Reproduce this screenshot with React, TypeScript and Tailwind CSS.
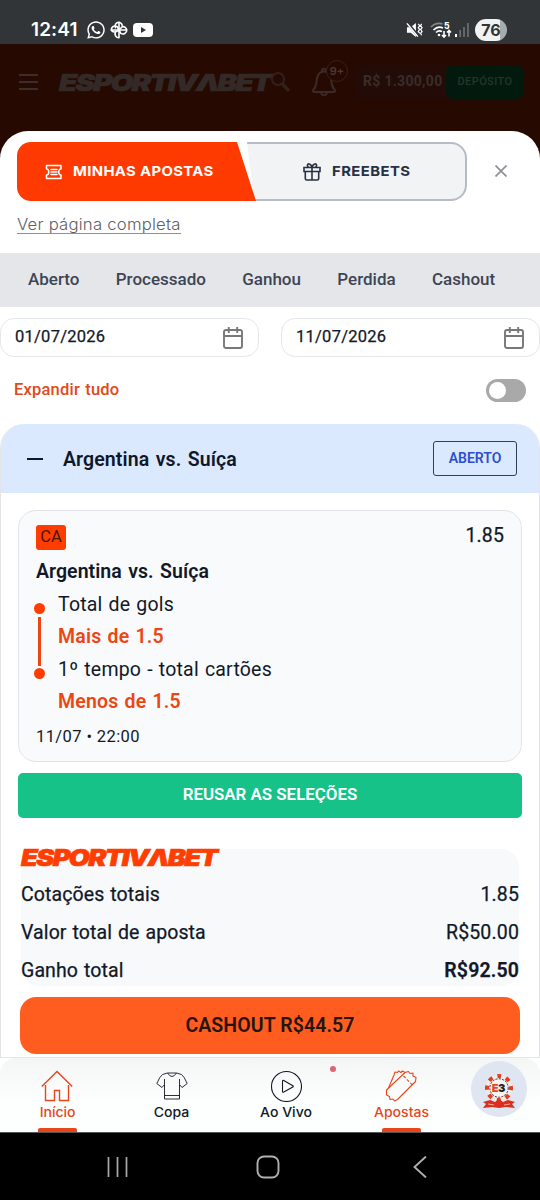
import type { ReactNode } from "react";
import clsx from "clsx";
import { FaWhatsapp } from "react-icons/fa";

const filters = ["Aberto", "Processado", "Ganhou", "Perdida", "Cashout"];

const Logo = ({ className }: { className?: string }) => (
  <svg viewBox="0 0 198 18" preserveAspectRatio="none" className={clsx("overflow-visible", className)} fill="currentColor">
    <text
      x="0"
      y="17"
      textLength="194.500"
      lengthAdjust="spacingAndGlyphs"
      letterSpacing="-1.3"
      fontFamily="Inter, sans-serif"
      fontSize="22.4"
      fontWeight="900"
      fontStyle="italic"
      stroke="currentColor"
      strokeWidth="0.7"
    >
      ESPORTIVΛBET
    </text>
  </svg>
);

const StatusBar = () => (
  <div className="h-11 bg-[#313537] flex justify-between items-start pt-[18px] pl-[31px] pr-[33px] text-white">
    <div className="flex items-center h-6">
      <span className="font-[Inter] font-semibold text-[19px] leading-6 w-[55px] tracking-[0.1px]">12:41</span>
      <FaWhatsapp className="w-[20px] h-[20px]" />
      <svg viewBox="0 0 18 18" className="w-[18px] h-[18px] ml-1" fill="none" stroke="white" strokeWidth="1.6" strokeLinejoin="round">
        <path d="M9 9V1.200a3.900 3.900 0 0 0-3.300 6" />
        <path d="M9 1.200a3.900 3.900 0 0 1 3.200 4.500L9 9" />
        <path d="M9 9h7.800a3.900 3.900 0 0 1-6 3.300L9 9M16.800 9a3.900 3.900 0 0 0-4.600-3.300" />
        <path d="M9 9v7.800a3.900 3.900 0 0 1-3.300-6L9 9" />
        <path d="M9 9H1.200a3.900 3.900 0 0 1 6-3.300L9 9M1.200 9a3.900 3.900 0 0 0 4.500 1.800" />
      </svg>
      <svg viewBox="0 0 20 14" className="w-[20px] h-[14px] ml-[5px]">
        <rect width="20" height="14" rx="4" fill="white" />
        <path d="M8 4v6l5-3z" fill="#313537" />
      </svg>
    </div>
    <div className="flex items-center h-6">
      <svg viewBox="0 0 18 18" className="w-[17px] h-[18px] mr-[7px]" fill="white">
        <path d="M1 6h4L10.500 1.500v15L5 12H1z" />
        <path d="M2 2l11.500 14" stroke="#313537" strokeWidth="3" />
        <path d="M1 2l11.500 14" stroke="white" strokeWidth="1.6" />
        <path d="M13 2.500l1.500 2-1.500 2 1.500 2-1.500 2 1.500 2M16.500 2.500l-1 2 1.500 2-1.500 2 1.500 2-1.500 2 1 2" fill="none" stroke="white" strokeWidth="1.300" />
      </svg>
      <svg viewBox="0 0 22 18" className="w-[22px] h-[18px] mr-[3px]" fill="none" stroke="white" strokeWidth="1.7">
        <path d="M1 6C4 3 8 1.800 12.500 2.800" stroke="#85888a" />
        <path d="M3.500 9c3-3 6.500-3.300 9.500-2M6 11.500c2-2 4-2 6-1" />
        <circle cx="9" cy="14" r="1.3" fill="white" stroke="none" />
        <path d="M14 10v6m-2-2 2 2 2-2M19 15.500v-6m-2 2 2-2 2 2" strokeWidth="1.6" />
        <text x="14" y="8" fill="white" stroke="none" fontFamily="Inter, sans-serif" fontSize="8.500" fontWeight="800">5</text>
      </svg>
      <svg viewBox="0 0 14 16" className="w-[14px] h-[16px] mr-[6px]">
        <path d="M1 12v3" stroke="white" strokeWidth="2" />
        <path d="M5.200 8v7M9 5v10M13 1v14" stroke="#6c7072" strokeWidth="1.700" />
      </svg>
      <div className="w-8 h-[22px] rounded-full text-[#313537] text-center font-[Inter] font-bold text-[16px] leading-[22px] bg-[linear-gradient(90deg,#f1f2f2_77%,#a8abac_77%)]">
        76
      </div>
    </div>
  </div>
);

const Header = () => (
  <header className="h-[119px] bg-[#260900] flex items-start pt-[20px] pl-[19px] pr-[16px] font-[Roboto]">
    <svg viewBox="0 0 20 18" className="w-[20px] h-[18px] mt-[9px] mr-[20px]" stroke="#3a2d2b" strokeWidth="2">
      <path d="M0 2h19M0 9h19M0 16h19" />
    </svg>
    <Logo className="w-[215px] h-[19px] mt-[9px] text-[#332a28]" />
    <svg viewBox="0 0 20 22" className="w-[20px] h-[22px] mt-[7px] -ml-[3px]" fill="none" stroke="#33201c" strokeWidth="2">
      <circle cx="7" cy="8" r="6" />
      <path d="M11.500 13l6.500 7" strokeWidth="3.500" />
    </svg>
    <div className="relative ml-[20px] mt-[2px]">
      <svg viewBox="0 0 26 31" className="w-[26px] h-[31px]" fill="none" stroke="#3b2a27" strokeWidth="2" strokeLinejoin="round">
        <path d="M2 24.500c4-4 3-7 4-12 1-5 4-7 7-7s6 2 7 7c1 5 0 8 4 12q0 1.500-1.500 1.500h-19q-1.500 0-1.500-1.500zM10 27c1 3 5 3 6 0M11 5c0-3 4-3 4 0" />
      </svg>
      <span className="absolute -top-[6px] left-[15px] w-[22px] h-[22px] rounded-full border border-[#3b1e18] bg-[#260900] text-[11px] leading-[20px] text-center font-semibold text-[#4a3936] font-[Inter]">
        9+
      </span>
    </div>
    <div className="ml-auto flex h-[34px] w-[168px] bg-[#230c07] rounded-lg mt-[1px] items-center">
      <span className="w-[90px] pl-[7px] pb-[2px] whitespace-nowrap text-[14px] font-bold tracking-[0.300px] text-[#382d2b]">R$ 1.300,00</span>
      <span className="flex-1 h-[34px] rounded-lg bg-[#021a0d] text-center text-[11px] font-medium leading-[34px] tracking-[0.400px] text-[#20382a]">DEPÓSITO</span>
    </div>
  </header>
);

const Tabs = () => (
  <div className="flex items-start pl-[17px] pt-[11px] h-[71px] font-[Inter] font-bold text-[13.5px]">
    <button className="relative z-10 w-[239px] h-[59px] bg-[#ff3a00] rounded-l-[14px] text-white flex items-center pl-[28px] [clip-path:polygon(0_0,220px_0,100%_100%,0_100%)]">
      <svg viewBox="0 0 18 16" className="w-[18px] h-[16px] mr-[10px]" fill="none" stroke="currentColor" strokeWidth="1.5" strokeLinejoin="round" strokeLinecap="round">
        <path d="M1.500 1.500h14.500v3.500c-3 0-3 6 0 6v3.500H1.500V11c3 0 3-6 0-6zM6 5.500h6M6 8h6M6 10.500h6" />
      </svg>
      <span className="inline-block origin-left scale-x-[1.100] tracking-[0.320px]">MINHAS APOSTAS</span>
    </button>
    <button className="-ml-[20px] w-[231px] h-[59px] border-2 border-[#b6bcc7] bg-[#f2f3f5] rounded-r-[16px] text-[#273044] flex items-center pl-[65px] [clip-path:polygon(11px_0,100%_0,100%_100%,18px_100%)]">
      <svg viewBox="0 0 18 18" className="w-[18px] h-[18px] mr-[11px]" fill="none" stroke="currentColor" strokeWidth="1.600">
        <path d="M1 4.500h16v4H1zM2.300 8.500v7q0 1.500 1.500 1.500h10.400q1.500 0 1.500-1.500v-7M9 4.500V17M9 4.500C8 0 4 0 4.500 3L5.500 4.500M9 4.500C10 0 14 0 13.500 3L12.500 4.500" />
      </svg>
      <span className="inline-block origin-left scale-x-[1.100] tracking-[0.400px]">FREEBETS</span>
    </button>
    <button className="ml-[28px] mt-[23px]">
      <svg viewBox="0 0 12 12" className="w-[12px] h-[12px]" stroke="#8d8f94" strokeWidth="1.700">
        <path d="M.500.500l11 11M11.500.500l-11 11" />
      </svg>
    </button>
  </div>
);

const DateField = ({ value }: { value: string }) => (
  <div className="w-[259px] h-[39px] rounded-[14px] border border-[#e5e7eb] flex items-center justify-between pl-[14px] pr-[15px] text-[16.500px] text-[#111827]">
    <span className="tracking-[0.250px] pb-[1px] [-webkit-text-stroke:0.250px]">{value}</span>
    <svg viewBox="0 0 20 22" className="w-[20px] h-[22px]" fill="none" stroke="#78787a" strokeWidth="1.900">
      <rect x="1" y="3" width="18" height="18" rx="2" />
      <path d="M1 9h18M5.800 0v6M14.200 0v6" />
    </svg>
  </div>
);

const Selection = ({ market, pick }: { market: string; pick: string }) => (
  <div className="h-[65px] pt-[1px] pl-[22px] text-[19.500px] leading-[32px] tracking-[0.200px] [word-spacing:1px]">
    <p>{market}</p>
    <p className="font-semibold text-[#ec4613]">{pick}</p>
  </div>
);

const BetCard = () => (
  <section className="h-[634px] border-x border-b border-[#e2e4e8] rounded-t-[24px] overflow-hidden text-[#111827]">
    <div className="h-[69px] bg-[#dbe9fe] flex items-center pl-[26px] pr-[22px]">
      <span className="w-[16px] h-[2px] bg-[#111827] mr-[20px]" />
      <h2 className="pt-[2px] text-[19.500px] font-semibold tracking-[0.100px] [word-spacing:1.500px] text-[#0f172a]">Argentina vs. Suíça</h2>
      <span className="ml-auto w-[84px] h-[35px] border border-[#333e52] rounded-[3px] text-center leading-[33px] text-[14px] font-semibold text-[#2b4fd0]">ABERTO</span>
    </div>

    <div className="mx-[17px] mt-[17px] h-[252px] border border-[#e2e4e9] rounded-[18px] bg-[#f9fafc] pl-[17px] pr-[17px] pt-[12px]">
      <div className="flex justify-between h-[32px] items-start">
        <span className="w-[30px] h-[25px] mt-[2px] rounded-[3px] bg-[#ff3d00] text-center text-[16.500px] leading-[24px] text-[#4a1505]">CA</span>
        <span className="text-[19.500px] leading-[26px] tracking-[0.150px] [-webkit-text-stroke:0.250px]">1.85</span>
      </div>
      <p className="text-[19.500px] leading-[33px] h-[33px] font-semibold tracking-[0.050px] [word-spacing:1.500px]">Argentina vs. Suíça</p>
      <div className="relative">
        <div className="absolute -left-[2px] top-[15px] flex flex-col items-center w-[11px]">
          <span className="w-[11px] h-[11px] rounded-full bg-[#ff3d00]" />
          <span className="w-[3px] h-[49px] my-[2.500px] bg-[#ec4613]" />
          <span className="w-[11px] h-[11px] rounded-full bg-[#ff3d00]" />
        </div>
        <Selection market="Total de gols" pick="Mais de 1.5" />
        <Selection market="1º tempo - total cartões" pick="Menos de 1.5" />
      </div>
      <p className="mt-[5px] text-[16.500px] leading-[28px] tracking-[0.400px]">11/07 • 22:00</p>
    </div>

    <button className="mx-[17px] mt-[11px] w-[504px] h-[45px] rounded-[5px] bg-[#17c289] text-white text-[16.900px] font-semibold pb-[2px]">
      REUSAR AS SELEÇÕES
    </button>

    <div className="mx-[20px] mt-[31px] h-[137px] rounded-[18px] bg-[#f8f9fb] text-[19.500px]">
      <Logo className="w-[199px] h-[18px] text-[#ff3d00]" />
      <SummaryRow label="Cotações totais">1.85</SummaryRow>
      <SummaryRow label="Valor total de aposta">R$50.00</SummaryRow>
      <SummaryRow label="Ganho total"><b className="font-semibold">R$92.50</b></SummaryRow>
    </div>

    <button className="mx-[19px] mt-[11px] w-[500px] h-[57px] rounded-[16px] bg-[#ff5c20] text-[#24150f] text-[19.500px] font-semibold pt-[1px] tracking-[0.100px]">
      CASHOUT R$44.57
    </button>
  </section>
);

const SummaryRow = ({ label, children }: { label: string; children: ReactNode }) => (
  <div className="flex justify-between h-[38px] items-center pt-[18px] leading-[18px] [-webkit-text-stroke:0.250px]">
    <span className="tracking-[0.100px] [word-spacing:1px]">{label}</span>
    <span className="tracking-[0.150px]">{children}</span>
  </div>
);

const NavItem = ({ label, active, children }: { label: string; active?: boolean; children: ReactNode }) => (
  <a className={clsx("relative w-[114.600px] h-[74px] flex flex-col items-center pt-[12px]", active ? "text-[#e8451c]" : "text-[#111827]")}>
    {children}
    <span className="inline-block scale-x-[1.080] font-[Inter] font-medium text-[13px] leading-[16px] mt-[2px] whitespace-nowrap">{label}</span>
    {active && <span className="mt-auto w-[39px] h-[4px] rounded-t-[2px] bg-[#e8451c]" />}
  </a>
);

const BottomNav = () => (
  <nav className="h-[74px] flex bg-linear-to-b from-[#f4f6f6] to-[#fdfffe] to-60% rounded-t-[16px]">
    <NavItem label="Início" active>
      <svg viewBox="0 0 32 32" className="w-8 h-8" fill="none" stroke="currentColor" strokeWidth="1.400">
        <path d="M.800 16.500L16 1.500l15.200 15M4.500 15v15.500h9V20.500h5v10h9V15" />
      </svg>
    </NavItem>
    <NavItem label="Copa">
      <svg viewBox="0 0 32 32" className="w-8 h-8" fill="none" stroke="currentColor" strokeWidth="0.900" strokeLinejoin="round">
        <path d="M11.500 3L6.500 4.500Q4 6 .800 13.500L6 17.500l2.500-3V29h15V14.500l2.500 3 5.200-4Q28 6 25.500 4.500L20.500 3M11.500 3h9M11.500 3q4.500 7 9 0M8.500 25.500h15M8.500 14.500V9M23.500 14.500V9" />
      </svg>
    </NavItem>
    <NavItem label="Ao Vivo">
      <svg viewBox="0 0 32 32" className="w-8 h-8" fill="none" stroke="currentColor" strokeWidth="1.100" strokeLinejoin="round">
        <circle cx="16.500" cy="16.500" r="15" />
        <path d="M12.500 11.300q0-1.300 1.300-.700l9 5.100q1 .700 0 1.400l-9 5q-1.300.600-1.300-.700z" />
      </svg>
      <span className="absolute top-[8px] right-[8px] w-[6px] h-[6px] rounded-full bg-[#dd6478]" />
    </NavItem>
    <NavItem label="Apostas" active>
      <svg viewBox="0 0 32 32" className="w-8 h-8" fill="none" stroke="currentColor" strokeWidth="1.100" strokeLinejoin="round">
        <path d="M1.500 20L20 2.500l3.500-1 1.500 2 3-.500 0 3 3 1.500-.500 4-18 18-3 1.500-1.500-2-3 .500-.500-3-3-1.500z" />
        <path d="M3.500 18L9 5l1-3 2.500.500 1-1.500 2.500 1.500 1.500-1.500L20 2.500" />
        <path d="M18.500 6l9 9" strokeDasharray="3 1.800" />
      </svg>
    </NavItem>
    <div className="ml-[13px] mt-[3px] w-[56px] h-[56px] shrink-0 rounded-full bg-[#dfe5f1] flex items-center justify-center">
      <svg viewBox="0 0 40 40" className="w-10 h-10">
        <circle cx="20" cy="19" r="13.500" fill="#f2e9e2" />
        <circle cx="20" cy="19" r="12" fill="none" stroke="#df3e29" strokeWidth="4" strokeDasharray="4.200 5.225" strokeDashoffset="2.100" transform="rotate(-90 20 19)" />
        <circle cx="20" cy="19" r="9.200" fill="#f7f3f1" stroke="#3a2320" strokeWidth="0.900" strokeDasharray="2 1.300" />
        <text x="12.800" y="23" fontFamily="Inter, sans-serif" fontWeight="900" fontSize="11" fill="#ed4426">E</text>
        <text x="19" y="23" fontFamily="Inter, sans-serif" fontWeight="900" fontSize="11" fill="#222">3</text>
        <path d="M4 33l7-2 5 2 4-3 4 3 5-2 7 2-3 2 3 4-9-1-7 1-7-1-9 1 3-4z" fill="#d92f1f" />
        <path d="M9 35l6 1M31 35l-6 1" stroke="#f5c8bd" strokeWidth="0.800" />
      </svg>
    </div>
  </nav>
);

const SystemNav = () => (
  <div className="h-[68px] bg-black flex items-center justify-between pl-[107px] pr-[113px] border-t border-[#555]">
    <svg viewBox="0 0 22 22" className="w-[22px] h-[22px]" stroke="#aaa" strokeWidth="1.700">
      <path d="M1.500 1v20M10.500 1v20M19.500 1v20" />
    </svg>
    <svg viewBox="0 0 24 24" className="w-[24px] h-[24px] -ml-[6px]" fill="none" stroke="#b0b0b0" strokeWidth="1.900">
      <rect x="1.500" y="1.500" width="21" height="21" rx="6.500" />
    </svg>
    <svg viewBox="0 0 14 22" className="w-[14px] h-[22px]" fill="none" stroke="#b0b0b0" strokeWidth="1.900">
      <path d="M13 .500L1.500 11 13 21.500" />
    </svg>
  </div>
);

const App = () => {
  return (
    <div className="w-[540px] h-[1200px] overflow-hidden bg-white font-[Roboto]">
      <StatusBar />
      <Header />
      <main className="relative -mt-8 bg-white rounded-t-[28px]">
        <Tabs />
        <div className="h-[51px] pl-[17px] pt-[11px]">
          <a className="inline-block h-[21px] border-b border-[#8d9095] text-[16px] leading-[22px] font-light font-[Inter] text-[#5e6066]">
            <span className="inline-block w-[164px] whitespace-nowrap origin-left scale-x-[1.045] tracking-[0.200px]">Ver página completa</span>
          </a>
        </div>
        <div className="h-[54px] bg-[#e5e6ea] flex items-center gap-[36.300px] pl-[28px] pb-[1px] text-[17px] font-medium text-[#3d4555]">
          {filters.map((item) => (
            <span key={item}>{item}</span>
          ))}
        </div>
        <div className="flex justify-between mt-[11px]">
          <DateField value="01/07/2026" />
          <DateField value="11/07/2026" />
        </div>
        <div className="flex items-center justify-between h-[67px] px-[14px]">
          <span className="pb-[1px] text-[16.500px] font-medium tracking-[0.200px] [word-spacing:1px] text-[#e04a1b]">Expandir tudo</span>
          <span className="w-[40px] h-[23px] rounded-full bg-[#a9a9a9] p-[3px]">
            <span className="block w-[17px] h-[17px] rounded-full bg-white" />
          </span>
        </div>
        <BetCard />
      </main>
      <BottomNav />
      <SystemNav />
    </div>
  );
};

export default App;
